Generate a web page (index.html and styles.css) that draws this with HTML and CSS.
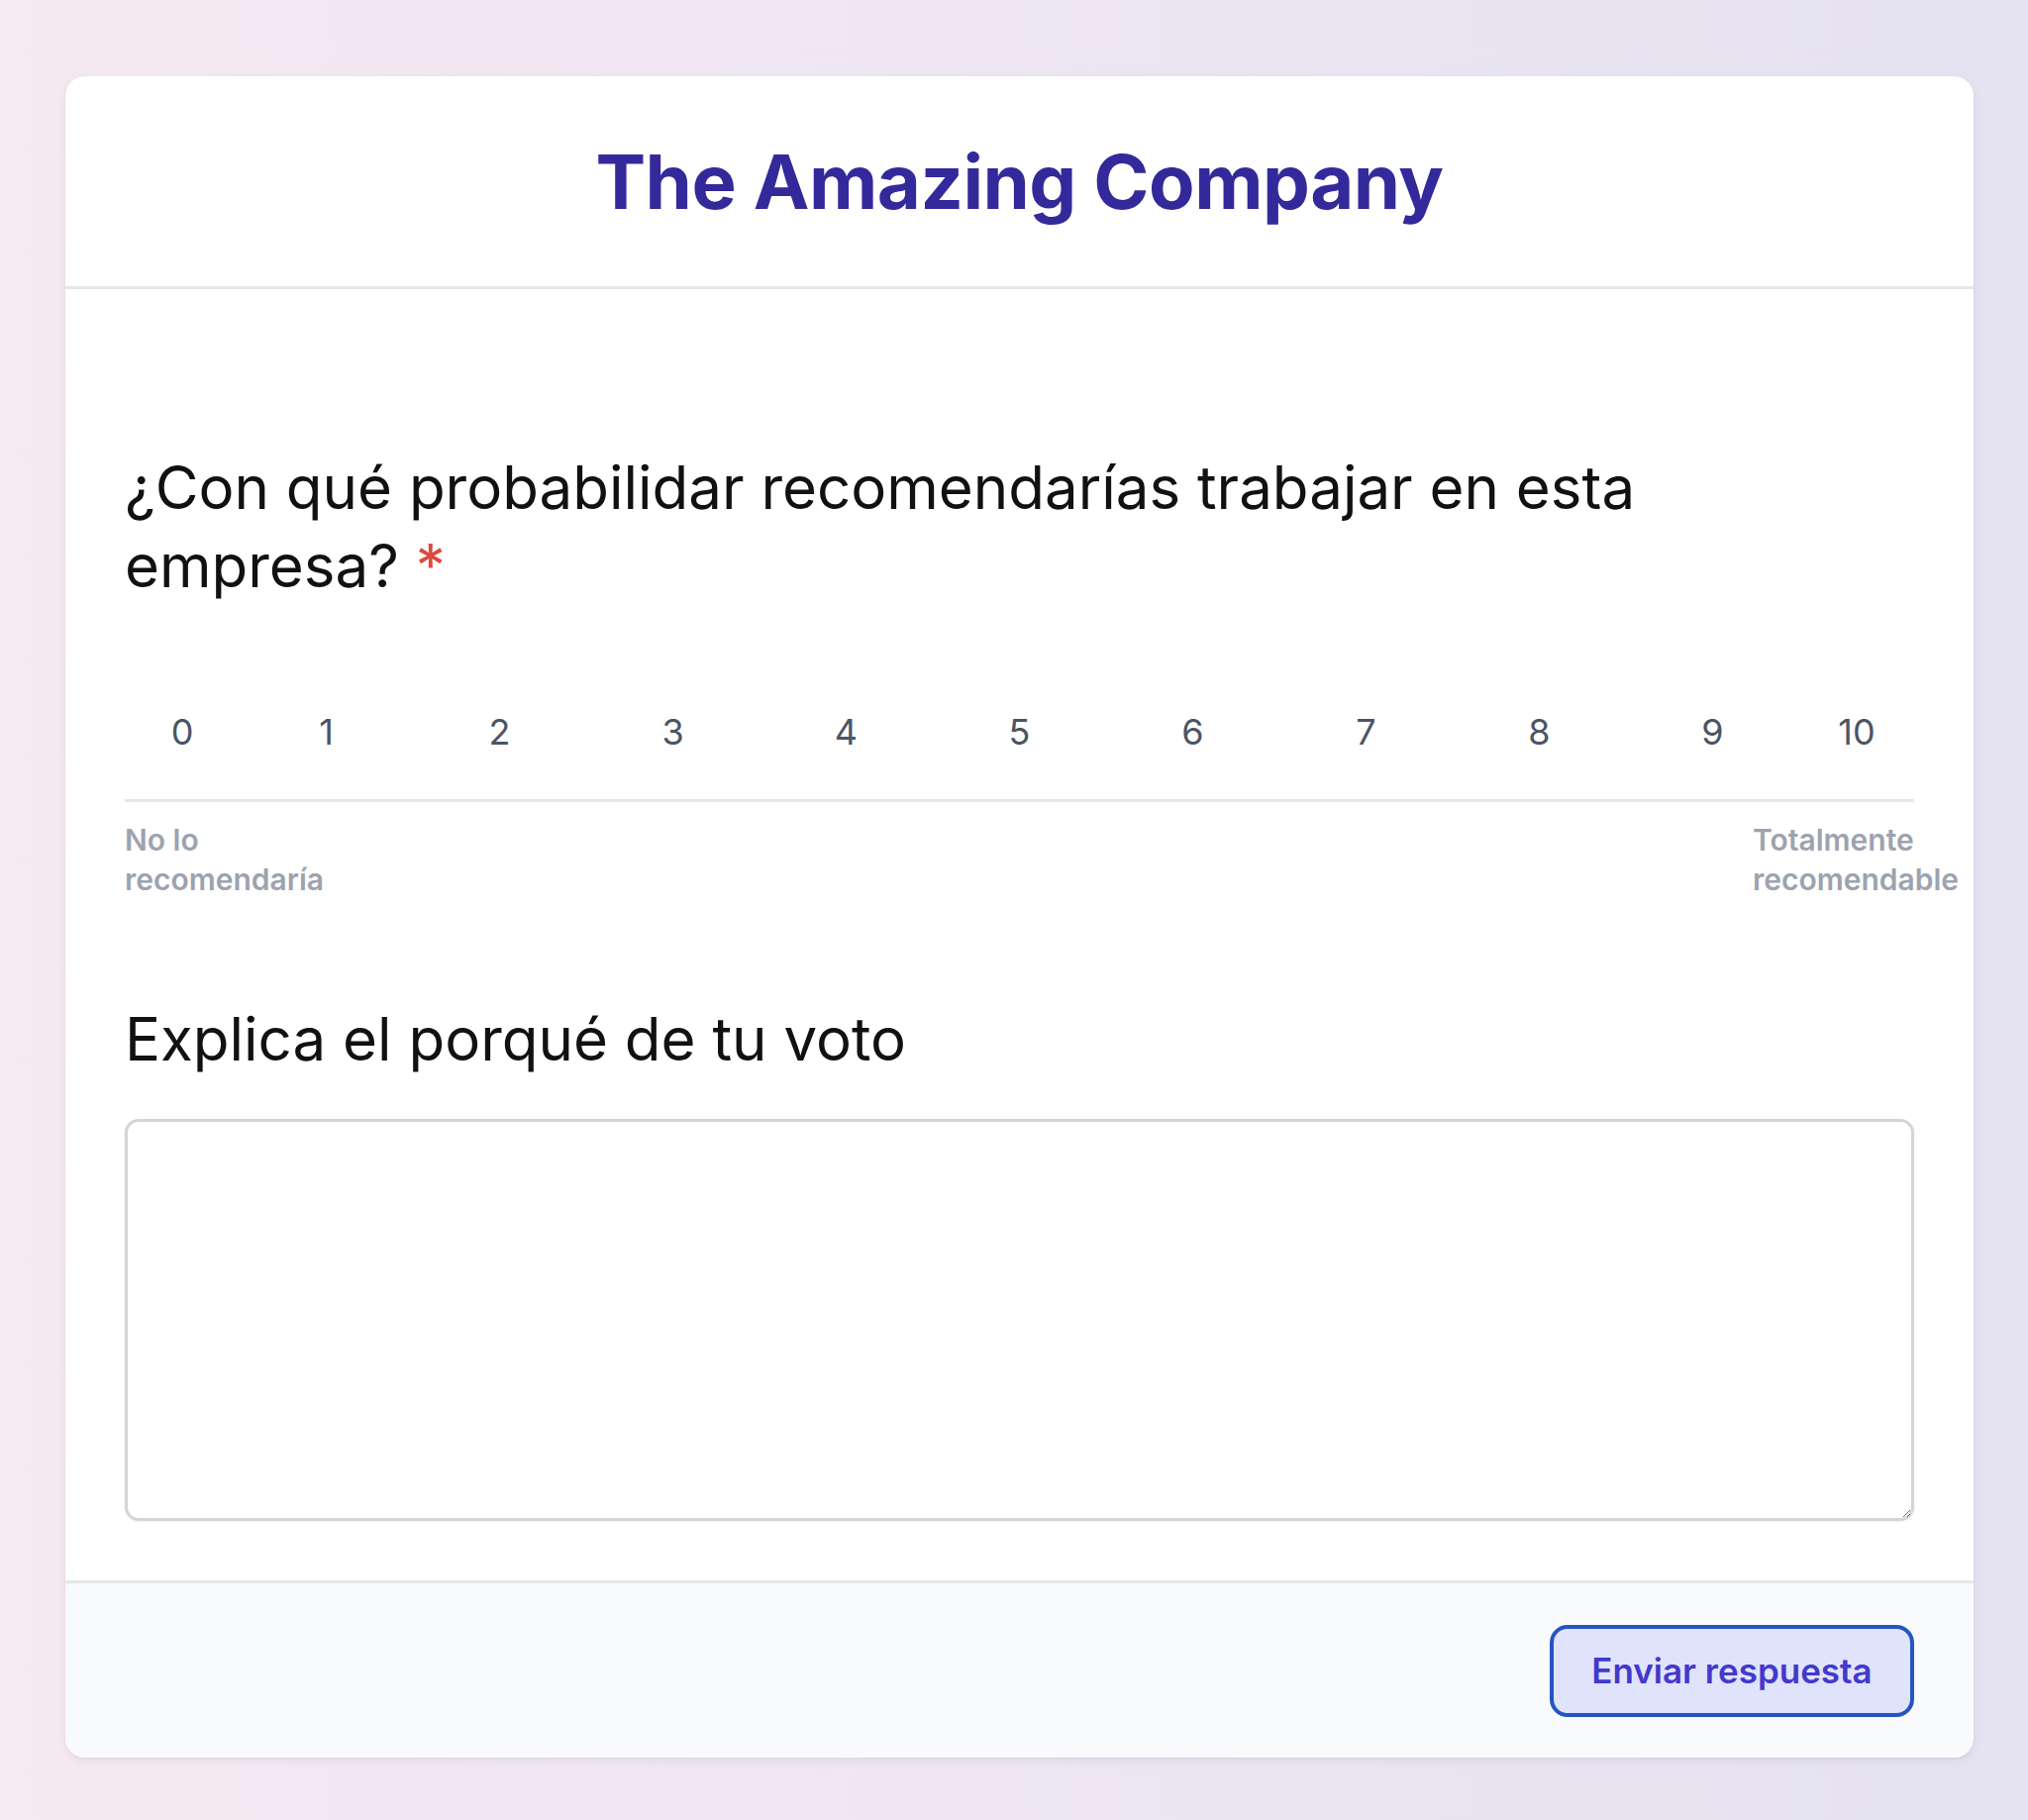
FILE: index.html
```html
<!DOCTYPE html>
<html lang="es">
<head>
<meta charset="utf-8">
<title>The Amazing Company</title>
<link rel="stylesheet" href="styles.css">
</head>
<body>
<div class="page">
  <form class="card">
    <header class="card-header">
      <h1 class="title">The Amazing Company</h1>
    </header>
    <section class="card-body">
      <h2 class="question">¿Con qué probabilidar recomendarías trabajar en esta empresa?&nbsp;<span class="required">*</span></h2>
      <div class="scale">
        <div class="scale-numbers">
          <span class="num edge">0</span>
          <span class="num">1</span>
          <span class="num">2</span>
          <span class="num">3</span>
          <span class="num">4</span>
          <span class="num">5</span>
          <span class="num">6</span>
          <span class="num">7</span>
          <span class="num">8</span>
          <span class="num">9</span>
          <span class="num edge">10</span>
        </div>
        <div class="scale-labels">
          <span class="scale-label">No lo recomendaría</span>
          <span class="scale-label">Totalmente recomendable</span>
        </div>
      </div>
      <label class="question second" for="why">Explica el porqué de tu voto</label>
      <textarea id="why" class="answer"></textarea>
    </section>
    <footer class="card-footer">
      <button type="button" class="submit">Enviar respuesta</button>
    </footer>
  </form>
</div>
</body>
</html>
```
FILE: styles.css
```css
html, body {
  margin: 0;
  padding: 0;
}
body {
  min-height: 1838px;
  background: linear-gradient(90deg, #f6e9f1 0%, #ede6f2 50%, #e5e2f1 100%);
  font-family: Inter, "Noto Sans", sans-serif;
}
.page {
  padding: 77px 55px 60px 66px;
}
.card {
  background: #ffffff;
  border-radius: 20px;
  box-shadow: 0 3px 10px rgba(90, 70, 120, 0.08), 0 1px 3px rgba(0, 0, 0, 0.05);
  overflow: hidden;
}
.card-header {
  height: 212px;
  border-bottom: 3px solid #e5e7eb;
  display: flex;
  align-items: center;
  justify-content: center;
}
.title {
  margin: 0;
  font-size: 76px;
  font-weight: 700;
  color: #34299b;
  letter-spacing: -0.5px;
}
.card-body {
  padding: 60px 60px 60px 60px;
  display: flex;
  flex-direction: column;
}
.question {
  margin: 101px 0 0 0;
  font-size: 60px;
  line-height: 79px;
  font-weight: 400;
  color: #111111;
}
.question.second {
  margin-top: 102px;
  display: block;
}
.required {
  color: #dc4a3d;
}
.scale {
  margin-top: 101px;
}
.scale-numbers {
  display: flex;
  padding-bottom: 41px;
  border-bottom: 3px solid #e5e7eb;
}
.num {
  flex: 1;
  text-align: center;
  font-size: 36px;
  line-height: 54px;
  color: #4b5563;
}
.num.edge {
  flex: 0 0 116px;
}
.scale-labels {
  display: flex;
  justify-content: space-between;
  margin-top: 18px;
}
.scale-label {
  width: 163px;
  font-size: 30px;
  line-height: 40px;
  font-weight: 600;
  color: #9ca3af;
}
.answer {
  margin-top: 41px;
  height: 406px;
  box-sizing: border-box;
  border: 3px solid #d1d5db;
  border-radius: 14px;
  box-shadow: 0 1px 3px rgba(0, 0, 0, 0.06);
  font-family: inherit;
  font-size: 32px;
  padding: 16px;
  resize: vertical;
  outline: none;
}
.card-footer {
  border-top: 3px solid #e5e7eb;
  background: #f9fafb;
  height: 176px;
  display: flex;
  align-items: center;
  justify-content: flex-end;
  padding: 0 60px;
}
.submit {
  width: 368px;
  height: 93px;
  box-sizing: border-box;
  background: #dfe4fc;
  border: 4px solid #2455c3;
  border-radius: 18px;
  color: #4438cc;
  font-family: Inter, "Noto Sans", sans-serif;
  font-size: 35px;
  font-weight: 600;
  cursor: pointer;
}
```
